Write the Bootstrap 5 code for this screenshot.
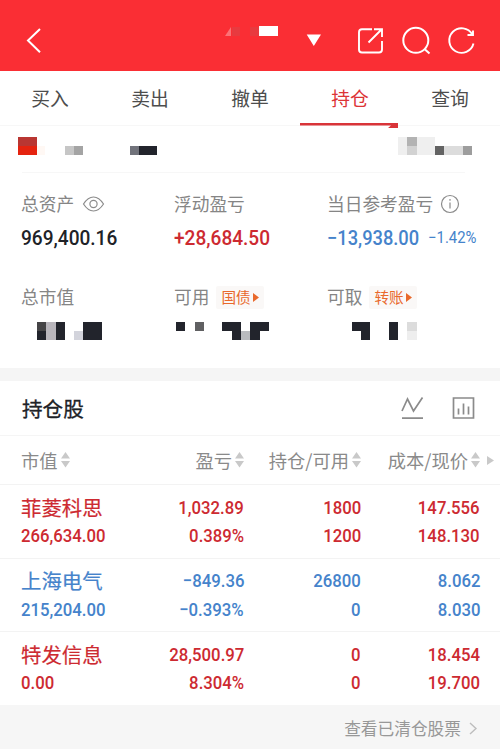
<!DOCTYPE html>
<html lang="zh-CN">
<head>
<meta charset="utf-8">
<meta name="viewport" content="width=device-width, initial-scale=1">
<title>持仓</title>
<link href="https://cdn.jsdelivr.net/npm/bootstrap@5.3.0/dist/css/bootstrap.min.css" rel="stylesheet">
<style>
body{font-family:"Noto Sans CJK SC","Liberation Sans",sans-serif;background:#fff;line-height:1;color:#202227;height:749px;overflow:hidden}
svg{display:block;flex:none}
.topbar{height:71px;background:#fa2e34}
.tabs{height:55px;border-bottom:1px solid #f7f7f7}
.tabs a{font-size:18.8px;color:#4d4d4d;text-decoration:none;width:100px;height:54px;padding-top:1px}
.tabs a.on{color:#dc3436}
.tab-line{position:absolute;left:300px;top:52px}
.account{height:46px}
.rule-a{height:1px;background:#f7f7f7;margin:0 35px 0 22px}
.stats{display:grid;grid-template-columns:153px 153px 1fr;padding-left:21px}
.stats .lab{height:24px;font-size:17.7px;color:#858585}
.num{font-family:Roboto,"Liberation Sans",sans-serif;font-weight:500;display:inline-block;white-space:nowrap;transform:scaleX(.9);transform-origin:left center}
.stats .num{font-size:20.2px;transform:scaleX(.945)}
.stats .day{transform:scaleX(.905);margin-right:-9px}
.stats .pct{font-size:16.2px;font-weight:400;transform:scaleX(.92)}
.tag{background:#faf8f7;color:#e9692c;font-size:14.6px;height:23px;border-radius:2px;margin-left:7px;padding:0 5px}
.tag svg{margin-left:2px}
.up{color:#cd2a31}.down{color:#4583cb}
.band{height:13px;background:#f5f5f5}
.sec{height:55px;border-bottom:1px solid #f5f5f5;padding:0 25px 0 22px}
.sec h1{font-size:20.6px;font-weight:400;line-height:1;-webkit-text-stroke:.3px #202227}
.cols{display:grid;grid-template-columns:123px 100px 117px 119px;padding-left:21px}
.heads{height:48px;font-size:18.3px;color:#8a8a8a}
.heads span{white-space:nowrap}
.heads span svg{margin-left:3px}
.hold{height:73.5px;border-top:1px solid #f3f3f3;align-content:start;padding-top:9px}
.hold>div{height:28.5px;display:flex;align-items:center;justify-content:flex-end}
.hold>div:nth-child(4n+1){justify-content:flex-start}
.hold .num{font-size:18.6px;transform-origin:right center}
.hold>div:nth-child(4n+1) .num{transform-origin:left center}
.hold .name{font-size:20.4px;padding-bottom:3px;-webkit-text-stroke:.2px currentColor}
.foot{height:44px;background:#f6f6f6;color:#989898;font-size:16.7px;padding:4px 23px 0 0}
</style>
<script src="https://cdn.jsdelivr.net/npm/bootstrap@5.3.0/dist/js/bootstrap.bundle.min.js"></script>
</head>
<body>
<svg width="0" height="0" class="position-absolute"><defs>
<g id="sort" fill="#c9c9c9"><path d="M0 6.5 4.5 0 9 6.5ZM0 9 9 9 4.5 15.5Z"/></g>
</defs></svg>

<header class="topbar">
<svg width="500" height="71" fill="none" stroke="#fff" stroke-width="2">
<path d="M40 29 28 40.5 40 52.3"/>
<g stroke="none"><path d="M225 36 231 27V36Z" fill="#fb7276"/><path d="M232 27h8v9h-8zM250 27h9v9h-9z" fill="#e83a3f"/><path d="M259 26h19v10h-19zM306.700 34.500h14.300l-7.200 11.500z" fill="#fff"/></g>
<path d="M372 29.200H362q-3 0-3 3V49.500q0 3 3 3h17q3 0 3-3V41M368.500 42.500 381.500 29.500M374 29.200h8V37" stroke-width="1.9"/>
<circle cx="415.800" cy="40.300" r="12.500"/><path d="m424.500 49 5 4.500"/>
<path d="M472.300 34.500A12.300 12.300 0 1 0 473.500 43.500M473 30.500V35H467.500" stroke-width="1.900"/>
</svg>
</header>

<nav class="tabs d-flex position-relative">
<a href="#" class="d-flex align-items-center justify-content-center">买入</a>
<a href="#" class="d-flex align-items-center justify-content-center">卖出</a>
<a href="#" class="d-flex align-items-center justify-content-center">撤单</a>
<a href="#" class="on d-flex align-items-center justify-content-center">持仓</a>
<a href="#" class="d-flex align-items-center justify-content-center">查询</a>
<svg class="tab-line" width="98" height="5"><path d="M0 0H98V5H88L91 2.600H0Z" fill="#d93439"/></svg>
</nav>

<section class="account">
<svg width="500" height="46" shape-rendering="crispEdges">
<path fill="#b93632" d="M18 11h19v9H18z"/><path fill="#e5230f" d="M18 20h19v9H18z"/><path fill="#fff8f4" d="M37 20h8v9h-8z"/>
<path fill="#c6c6c6" d="M65 20h9v9h-9z"/><path fill="#a4a4a4" d="M74 20h9v9h-9z"/>
<path fill="#71737b" d="M130 20h9v9h-9z"/><path fill="#22242c" d="M139 20h18v9h-18z"/>
<path fill="#efefef" d="M398 11h37v18h-37z"/><path fill="#b3b3b3" d="M407 11h10v9h-10z"/><path fill="#d2d2d2" d="M407 20h10v9h-10z"/>
<path fill="#636363" d="M435 20h9v9h-9z"/><path fill="#dcdcdc" d="M444 20h19v9h-19z"/><path fill="#9d9d9d" d="M463 20h9v9h-9z"/>
</svg>
</section>
<div class="rule-a"></div>

<section class="stats" style="padding-top:19px">
<div class="lab d-flex align-items-center">总资产
<svg class="ms-2" width="23" height="18" fill="none" stroke="#8b8b8b" stroke-width="1.200"><path d="M1.500 9Q6 2 11.500 2T21.500 9Q17 16 11.500 16T1.500 9Z"/><circle cx="11.500" cy="9" r="3.600"/></svg></div>
<div class="lab d-flex align-items-center">浮动盈亏</div>
<div class="lab d-flex align-items-center">当日参考盈亏
<svg style="margin-left:7px" width="20" height="20" fill="none" stroke="#8b8b8b" stroke-width="1.200"><circle cx="10" cy="10" r="8.500"/><path d="M10 8.500v6M10 5v1.800"/></svg></div>
</section>
<section class="stats align-items-center" style="height:44px">
<div><span class="num">969,400.16</span></div>
<div><span class="num up">+28,684.50</span></div>
<div class="d-flex align-items-center"><span class="num day down">−13,938.00</span><span class="num pct down ms-2">−1.42%</span></div>
</section>
<section class="stats" style="padding-top:25px">
<div class="lab d-flex align-items-center">总市值</div>
<div class="lab d-flex align-items-center">可用<span class="tag d-inline-flex align-items-center">国债<svg width="6" height="9"><path d="M0 0 6 4.500 0 9Z" fill="#e9692c"/></svg></span></div>
<div class="lab d-flex align-items-center">可取<span class="tag d-inline-flex align-items-center">转账<svg width="6" height="9"><path d="M0 0 6 4.500 0 9Z" fill="#e9692c"/></svg></span></div>
</section>
<svg width="500" height="59" shape-rendering="crispEdges">
<g fill="#22242c"><path d="M37 22h9v9h-9zM56 13h9v18h-9zM83 13h19v18H83zM176 13h9v9h-9zM222 13h19v18h-9v-9h-10zM250 13h19v9h-9v9h-10zM352 13h18v18h-9v-9h-9zM389 13h9v18h-9z"/></g>
<path fill="#454446" d="M37 13h9v9h-9z"/><path fill="#b9b6bc" d="M46 13h10v18H46z"/><path fill="#d3d4dc" d="M74 22h9v9h-9z"/><path fill="#606062" d="M195 13h9v9h-9z"/><path fill="#b9bbbf" d="M241 22h9v9h-9z"/><path fill="#dcdcdc" d="M407 13h10v9h-10z"/><path fill="#eee" d="M407 22h10v9h-10z"/>
</svg>
<div class="band"></div>

<section class="sec d-flex align-items-center">
<h1 class="m-0 me-auto">持仓股</h1>
<svg width="23" height="24" fill="none" stroke="#8b8b8b" stroke-width="1.700"><path d="M1 15 6.500 3 12.500 15 21.500 1.500M1 22.200H22"/></svg>
<svg style="margin-left:28px" width="23" height="24" fill="none" stroke="#8b8b8b" stroke-width="1.700"><path d="M1.500 2h20v20h-20zM6.500 18.500v-6M11.500 18.500v-11M16.500 18.500v-8"/></svg>
</section>

<div class="cols heads align-items-center position-relative">
<span class="d-flex align-items-center">市值<svg width="9" height="16"><use href="#sort"/></svg></span>
<span class="d-flex align-items-center justify-content-end">盈亏<svg width="9" height="16"><use href="#sort"/></svg></span>
<span class="d-flex align-items-center justify-content-end">持仓/可用<svg width="9" height="16"><use href="#sort"/></svg></span>
<span class="d-flex align-items-center justify-content-end">成本/现价<svg width="9" height="16"><use href="#sort"/></svg></span>
<svg class="position-absolute" style="left:487px;top:20px" width="7" height="9"><path d="M0 0 7 4.500 0 9Z" fill="#c9c9c9"/></svg>
</div>

<div class="cols hold up">
<div class="name">菲菱科思</div><div><span class="num">1,032.89</span></div><div><span class="num">1800</span></div><div><span class="num">147.556</span></div>
<div><span class="num">266,634.00</span></div><div><span class="num">0.389%</span></div><div><span class="num">1200</span></div><div><span class="num">148.130</span></div>
</div>
<div class="cols hold down">
<div class="name">上海电气</div><div><span class="num">−849.36</span></div><div><span class="num">26800</span></div><div><span class="num">8.062</span></div>
<div><span class="num">215,204.00</span></div><div><span class="num">−0.393%</span></div><div><span class="num">0</span></div><div><span class="num">8.030</span></div>
</div>
<div class="cols hold up">
<div class="name">特发信息</div><div><span class="num">28,500.97</span></div><div><span class="num">0</span></div><div><span class="num">18.454</span></div>
<div><span class="num">0.00</span></div><div><span class="num">8.304%</span></div><div><span class="num">0</span></div><div><span class="num">19.700</span></div>
</div>
<footer class="foot d-flex align-items-center justify-content-end">查看已清仓股票<svg style="margin-left:8px" width="8" height="13" fill="none" stroke="#bdbdbd" stroke-width="1.400"><path d="m1 1 6 5.500L1 12"/></svg></footer>
</body>
</html>
